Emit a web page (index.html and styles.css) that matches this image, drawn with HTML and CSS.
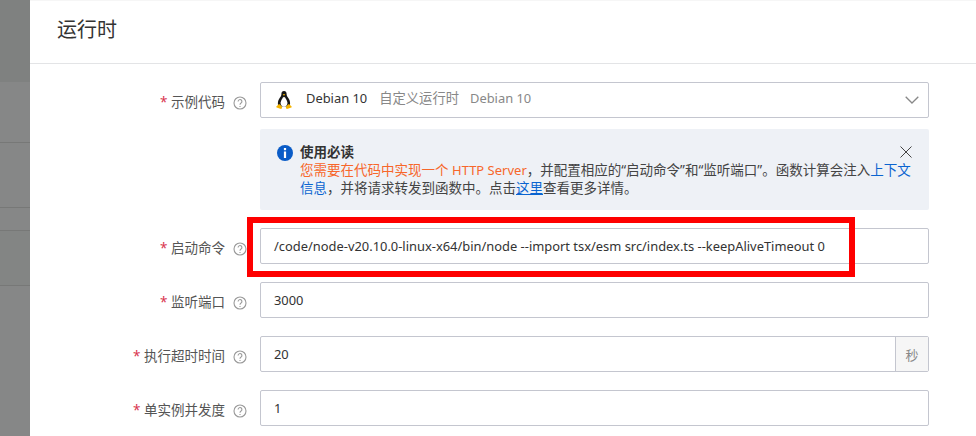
FILE: index.html
```html
<!DOCTYPE html>
<html lang="zh-CN">
<head>
<meta charset="utf-8">
<title>运行时</title>
<link rel="stylesheet" href="styles.css">
</head>
<body>
<div class="page">
  <aside class="backdrop">
    <div class="b b1"></div>
    <div class="b b2"></div>
    <div class="b b3"></div>
    <div class="b b4"></div>
    <div class="b b5"></div>
    <div class="b b6"></div>
  </aside>
  <main class="panel">
    <header class="head"><h1 class="title">运行时</h1></header>
    <div class="form">
      <div class="row">
        <div class="label"><span class="star">*</span> 示例代码<svg class="help" viewBox="0 0 14 14"><circle cx="7" cy="7" r="6" /><path d="M5.1 5.5a1.9 1.9 0 1 1 2.9 1.6c-.7.4-1 .8-1 1.6" /><path d="M7 10v1" /></svg></div>
        <div class="field select">
          <svg class="tux" viewBox="0 0 16 18">
            <path d="M8 0C6 0 5.300 1.500 5.400 3.300 5.500 4.800 4.300 6 3.200 7.700 2 9.500 1.500 12 2.200 15.500l11.600 0c.7-3.500.2-6-1-7.800C11.700 6 10.500 4.800 10.600 3.300 10.700 1.500 10 0 8 0z" fill="#161616"/>
            <path d="M8 5.800C6.800 6.400 5 9.200 4.600 11.500 4.300 14 6 15.800 8 15.800s3.700-1.800 3.400-4.300C11 9.200 9.200 6.400 8 5.800z" fill="#fff"/>
            <path d="M6.700 3.500 8 3l1.300.5L8 4.700z" fill="#f5b400"/>
            <path d="M3 13 .4 15.600c-.3.400-.2.700.3.900l3.500 1.300c1 .3 1.900-.1 1.900-1 0-1.400-1.400-2.800-3.100-3.800zM13 13l2.600 2.600c.3.400.2.700-.3.900l-3.500 1.300c-1 .3-1.900-.1-1.900-1 0-1.400 1.400-2.800 3.100-3.800z" fill="#f5b400"/>
          </svg>
          <span class="val">Debian 10</span><span class="muted m1">自定义运行时</span><span class="muted m2">Debian 10</span>
          <svg class="chev" viewBox="0 0 14 8"><path d="M.7.7 7 7 13.300.7"/></svg>
        </div>
      </div>
      <div class="notice">
        <svg class="info" viewBox="0 0 16 16"><circle cx="8" cy="8" r="8" fill="#0a5cc7"/><rect x="6.900" y="3" width="2.200" height="2.200" fill="#fff"/><rect x="6.900" y="6.500" width="2.200" height="6.500" fill="#fff"/></svg>
        <div class="ntext">
          <div class="ntitle">使用必读</div>
          <div class="nbody"><span class="orange">您需要在代码中实现一个 <span class="latin">HTTP Server</span></span>，并配置相应的“启动命令”和“监听端口”。函数计算会注入<span class="link">上下文</span><span class="link">信息</span>，并将请求转发到函数中。点击<span class="link under">这里</span>查看更多详情。</div>
        </div>
        <svg class="close" viewBox="0 0 12 12"><path d="M.5.5l11 11M11.500.5l-11 11"/></svg>
      </div>
      <div class="row">
        <div class="label"><span class="star">*</span> 启动命令<svg class="help" viewBox="0 0 14 14"><circle cx="7" cy="7" r="6" /><path d="M5.1 5.5a1.9 1.9 0 1 1 2.9 1.6c-.7.4-1 .8-1 1.6" /><path d="M7 10v1" /></svg></div>
        <div class="field"><span class="val">/code/node-v20.10.0-linux-x64/bin/node --import tsx/esm src/index.ts --keepAliveTimeout 0</span></div>
      </div>
      <div class="row">
        <div class="label"><span class="star">*</span> 监听端口<svg class="help" viewBox="0 0 14 14"><circle cx="7" cy="7" r="6" /><path d="M5.1 5.5a1.9 1.9 0 1 1 2.9 1.6c-.7.4-1 .8-1 1.6" /><path d="M7 10v1" /></svg></div>
        <div class="field"><span class="val">3000</span></div>
      </div>
      <div class="row">
        <div class="label"><span class="star">*</span> 执行超时时间<svg class="help" viewBox="0 0 14 14"><circle cx="7" cy="7" r="6" /><path d="M5.1 5.5a1.9 1.9 0 1 1 2.9 1.6c-.7.4-1 .8-1 1.6" /><path d="M7 10v1" /></svg></div>
        <div class="field addon-field"><span class="val">20</span><span class="addon">秒</span></div>
      </div>
      <div class="row">
        <div class="label"><span class="star">*</span> 单实例并发度<svg class="help" viewBox="0 0 14 14"><circle cx="7" cy="7" r="6" /><path d="M5.1 5.5a1.9 1.9 0 1 1 2.9 1.6c-.7.4-1 .8-1 1.6" /><path d="M7 10v1" /></svg></div>
        <div class="field"><span class="val">1</span></div>
      </div>
    </div>
  </main>
</div>
<div class="redbox"></div>
</body>
</html>
```
FILE: styles.css
```css
* { box-sizing: border-box; }
html, body { margin: 0; padding: 0; height: 100%; overflow: hidden; }
body {
  background: #fff;
  font-family: "Noto Sans", "Noto Sans CJK SC", sans-serif;
  font-size: 13px;
  color: #333;
}
.page { display: flex; width: 976px; height: 436px; }
.backdrop { width: 30px; flex: none; display: flex; flex-direction: column; background: #868787; }
.b { flex: none; border-bottom: 1px solid #777877; }
.b1 { height: 82px; background: #7f8180; border-bottom: 0; }
.b2 { height: 61px; }
.b3 { height: 65px; }
.b4 { height: 23px; }
.b5 { height: 55px; background: #838584; }
.b6 { flex: 1; border-bottom: 0; }
.panel { flex: 1; min-width: 0; }
.head { height: 64px; border-bottom: 1px solid #e3e4e6; padding: 16px 0 0 27px; border-top: 1px solid #f6f6f6; }
.title { margin: 0; font-size: 20px; line-height: 26px; font-weight: 400; color: #333; }
.form { padding: 18px 47px 0 0; display: flex; flex-direction: column; gap: 18px; }
.row { display: flex; align-items: center; height: 36px; }
.label { width: 230px; flex: none; display: flex; align-items: center; justify-content: flex-end; white-space: pre; color: #555; font-size: 13.5px; line-height: 18px; padding: 3px 13px 0 0; }
.star { color: #d9344f; }
.help { width: 14px; height: 14px; margin-left: 8px; margin-top: 2px; fill: none; stroke: #999; stroke-width: 1.100; }
.field { flex: 1; height: 36px; border: 1px solid #c4c6cf; border-radius: 2px; display: flex; align-items: center; padding: 0 0 0 13px; min-width: 0; }
.val { font-size: 12.9px; line-height: 18px; color: #333; white-space: nowrap; }
.select { padding: 0 0 2px 15px; }
.select .val, .select .muted { margin-top: -2px; }
.tux { width: 16px; height: 18px; margin-right: 14px; flex: none; margin-top: 1px; }
.muted { color: #888; font-size: 13.3px; line-height: 18px; }
.m1 { margin-left: 12px; }
.m2 { margin-left: 11px; font-size: 12.9px; }
.chev { width: 14px; height: 8px; margin-left: auto; margin-right: 9px; margin-top: 1px; fill: none; stroke: #888; stroke-width: 1.300; }
.addon-field { justify-content: space-between; }
.addon { width: 33px; height: 34px; background: #f6f6f6; border-left: 1px solid #c4c6cf; color: #888; font-size: 13px; display: flex; align-items: center; justify-content: center; }
.notice { height: 81px; margin: -7px 0 0 230px; background: #eef1f6; border-radius: 2px; display: flex; align-items: flex-start; padding: 16px 17px 0 17px; }
.info { width: 16px; height: 16px; flex: none; margin: 0 7px 0 0; }
.ntext { flex: 1; min-width: 0; font-size: 13.5px; line-height: 18px; color: #444; margin-top: -2px; }
.ntitle { font-weight: 700; color: #333; }
.orange { color: #f7672b; }
.latin { font-size: 13px; }
.link { color: #0a64d0; }
.under { text-decoration: underline; }
.close { width: 12px; height: 12px; flex: none; position: relative; top: 1px; left: 0; margin-left: -12px; fill: none; stroke: #444; stroke-width: 1; }
.redbox { position: absolute; left: 247px; top: 217px; width: 608px; height: 60px; border: 6px solid #fe0000; pointer-events: none; }
```
